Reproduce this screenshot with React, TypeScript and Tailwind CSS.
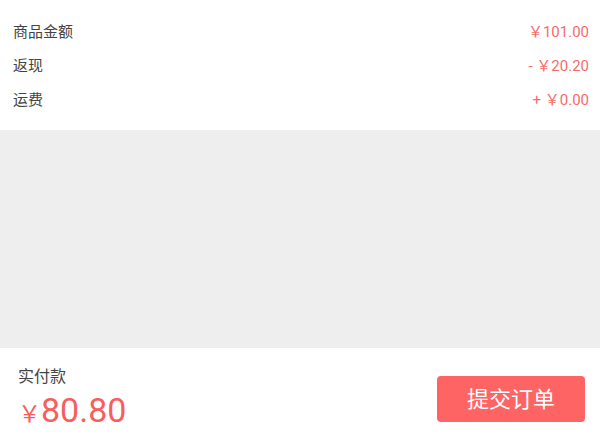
const rows = [
  { label: "商品金额", value: "￥101.00" },
  { label: "返现", value: "- ￥20.20" },
  { label: "运费", value: "+ ￥0.00" },
];

export default function App() {
  return (
    <div
      className="flex h-[437px] w-[600px] flex-col bg-[#eeeeee]"
      style={{ fontFamily: 'Roboto, "Noto Sans CJK SC", sans-serif' }}
    >
      <div className="bg-white pt-[15px] pr-[11px] pb-[13px] pl-[13px]">
        {rows.map((row) => (
          <div key={row.label} className="flex h-[34px] items-center justify-between">
            <span className="text-[15px] text-[#444444]">{row.label}</span>
            <span className="text-[15px] text-[#f76b6b]">{row.value}</span>
          </div>
        ))}
      </div>

      <div className="flex-1" />

      <div className="flex h-[89px] items-center justify-between bg-white pr-[15px] pl-[18px]">
        <div className="mt-[14px] flex flex-col">
          <span className="text-[16px] leading-[22px] text-[#444444]">实付款</span>
          <span className="mt-[4px] flex items-baseline leading-[36px] text-[#f75f5f]">
            <span className="text-[23px]">￥</span>
            <span className="text-[34px]">80.80</span>
          </span>
        </div>
        <button className="mt-[13px] h-[46px] w-[148px] rounded-[4px] bg-[#ff6464] text-[22px] text-white">
          提交订单
        </button>
      </div>
    </div>
  );
}
